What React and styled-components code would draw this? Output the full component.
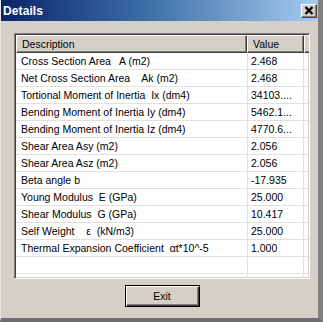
import styled, { createGlobalStyle } from "styled-components"

const rows = [
    { name: "Cross Section Area   A (m2)", value: "2.468" },
    { name: "Net Cross Section Area    Ak (m2)", value: "2.468" },
    { name: "Tortional Moment of Inertia  Ix (dm4)", value: "34103...." },
    { name: "Bending Moment of Inertia Iy (dm4)", value: "5462.1..." },
    { name: "Bending Moment of Inertia Iz (dm4)", value: "4770.6..." },
    { name: "Shear Area Asy (m2)", value: "2.056" },
    { name: "Shear Area Asz (m2)", value: "2.056" },
    { name: "Beta angle b", value: "-17.935" },
    { name: "Young Modulus  E (GPa)", value: "25.000" },
    { name: "Shear Modulus  G (GPa)", value: "10.417" },
    { name: "Self Weight    \u03b5  (kN/m3)", value: "25.000" },
    { name: "Thermal Expansion Coefficient  \u03b1t*10^-5", value: "1.000" },
    { name: "", value: "" },
    { name: "", value: "" },
]

const App = () => {
    return (
        <>
            <GlobalStyle />
            <Window>
                <TitleBar>
                    <Title>Details</Title>
                    <CloseButton>
                        <svg width="10" height="9" viewBox="0 0 10 9">
                            <path d="M1.5 1L8.5 8M8.5 1L1.5 8" stroke="#000" strokeWidth="2.4" />
                        </svg>
                    </CloseButton>
                </TitleBar>
                <Body>
                    <ListBox>
                        <HeaderRow>
                            <HeaderCell>Description</HeaderCell>
                            <HeaderCell>Value</HeaderCell>
                            <HeaderCell />
                        </HeaderRow>
                        {rows.map((row, index) => (
                            <Row key={index}>
                                <Cell>{row.name}</Cell>
                                <Cell divider>{row.value}</Cell>
                            </Row>
                        ))}
                    </ListBox>
                    <ButtonRow>
                        <ExitButton>Exit</ExitButton>
                    </ButtonRow>
                </Body>
            </Window>
        </>
    )
}

export default App

const GlobalStyle = createGlobalStyle`
body {
    margin: 0;
    background: #d4d0c8;
    font-family: "Liberation Sans", Arial, sans-serif;
}
`

const Window = styled.div`
width: 323px;
height: 322px;
box-sizing: border-box;
background: #d4d0c8;
border-left: 1px solid #e8e6e0;
border-right: 5px solid #808080;
border-bottom: 4px solid #6e6e6e;
display: flex;
flex-direction: column;
overflow: hidden;
`

const TitleBar = styled.div`
height: 21px;
flex-shrink: 0;
display: flex;
align-items: center;
justify-content: space-between;
padding: 0 1px 0 2px;
background: linear-gradient(to right, #0a246a 0%, #3a6ea5 45%, #a6caf0 100%);
`

const Title = styled.span`
color: #fff;
font-weight: bold;
font-size: 12px;
letter-spacing: 0.1px;
`

const CloseButton = styled.div`
width: 16px;
height: 14px;
box-sizing: border-box;
background: #d4d0c8;
border-top: 1px solid #fff;
border-left: 1px solid #fff;
border-right: 1px solid #404040;
border-bottom: 1px solid #404040;
box-shadow: inset -1px -1px 0 #808080;
display: flex;
align-items: center;
justify-content: center;
`

const Body = styled.div`
flex: 1;
display: flex;
flex-direction: column;
padding: 12px 8px 0 13px;
`

const ListBox = styled.div`
height: 246px;
box-sizing: border-box;
background: #fff;
border-top: 1px solid #808080;
border-left: 1px solid #808080;
border-right: 1px solid #fff;
border-bottom: 1px solid #fff;
box-shadow: inset 1px 1px 0 #404040, inset -1px -1px 0 #d4d0c8;
padding: 1px;
overflow: hidden;
font-size: 10.5px;
color: #000;
`

const HeaderRow = styled.div`
display: grid;
grid-template-columns: 231px 57px 1fr;
height: 18px;
`

const HeaderCell = styled.div`
box-sizing: border-box;
background: #d4d0c8;
border-top: 1px solid #fff;
border-left: 1px solid #fff;
border-right: 1px solid #404040;
border-bottom: 1px solid #404040;
box-shadow: inset -1px -1px 0 #808080;
padding: 2px 0 0 5px;
line-height: 13px;
`

const Row = styled.div`
display: grid;
grid-template-columns: 231px 57px 1fr;
height: 17px;
box-sizing: border-box;
border-bottom: 1px solid #e2e0da;
`

const Cell = styled.div`
box-sizing: border-box;
padding: 0 0 0 ${props => props.divider ? "3px" : "5px"};
border-left: ${props => props.divider ? "1px solid #e2e0da" : "none"};
border-right: ${props => props.divider ? "1px solid #e2e0da" : "none"};
line-height: 16px;
white-space: pre;
overflow: hidden;
`

const ButtonRow = styled.div`
display: flex;
justify-content: center;
padding: 6px 0 0 0;
`

const ExitButton = styled.div`
width: 75px;
height: 22px;
box-sizing: border-box;
background: #d4d0c8;
border: 1px solid #000;
box-shadow: inset 1px 1px 0 #fff, inset -1px -1px 0 #404040, inset -2px -2px 0 #808080;
display: flex;
align-items: center;
justify-content: center;
font-size: 10.5px;
color: #000;
`
